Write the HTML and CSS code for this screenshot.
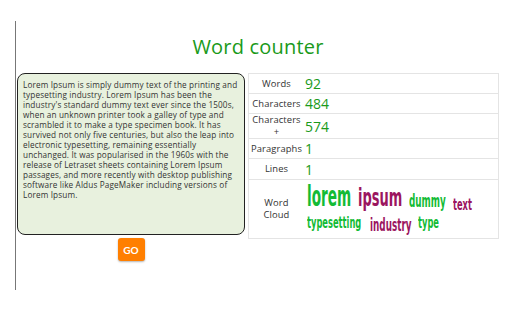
FILE: index.html
```html
<!DOCTYPE html>
<html>
<head>
<meta charset="utf-8">
<link rel="stylesheet" href="styles.css">
</head>
<body>
<div class="frame">
  <div class="content">
    <h1 class="title">Word counter</h1>
    <div class="main">
      <div class="left">
        <textarea class="input">Lorem Ipsum is simply dummy text of the printing and typesetting industry. Lorem Ipsum has been the industry's standard dummy text ever since the 1500s, when an unknown printer took a galley of type and scrambled it to make a type specimen book. It has survived not only five centuries, but also the leap into electronic typesetting, remaining essentially unchanged. It was popularised in the 1960s with the release of Letraset sheets containing Lorem Ipsum passages, and more recently with desktop publishing software like Aldus PageMaker including versions of Lorem Ipsum.</textarea>
        <button class="go">GO</button>
      </div>
      <table class="stats">
        <tr class="r1"><th>Words</th><td class="val">92</td></tr>
        <tr class="r2"><th>Characters</th><td class="val">484</td></tr>
        <tr class="r3"><th>Characters<br>+</th><td class="val">574</td></tr>
        <tr class="r4"><th>Paragraphs</th><td class="val">1</td></tr>
        <tr class="r5"><th>Lines</th><td class="val">1</td></tr>
        <tr class="r6"><th>Word<br>Cloud</th><td class="cloud">
          <div class="cloud-line l1">
            <span class="w g w-lorem"><span class="t">lorem</span></span>
            <span class="w m w-ipsum"><span class="t">ipsum</span></span>
            <span class="w g w-dummy"><span class="t">dummy</span></span>
            <span class="w m w-text"><span class="t">text</span></span>
          </div>
          <div class="cloud-line l2">
            <span class="w g w-type1"><span class="t">typesetting</span></span>
            <span class="w m w-ind"><span class="t">industry</span></span>
            <span class="w g w-type2"><span class="t">type</span></span>
          </div>
        </td></tr>
      </table>
    </div>
  </div>
</div>
</body>
</html>
```
FILE: styles.css
```css
html, body {
  margin: 0;
  padding: 0;
  background: #fff;
}
body {
  font-family: "Open Sans", "DejaVu Sans", sans-serif;
  color: #333;
}
.frame {
  margin: 21px 0 0 15px;
  height: 269px;
  border-left: 1px solid #777;
}
.content {
  margin-left: 1px;
  width: 482px;
}
.title {
  margin: 0;
  padding-top: 14px;
  height: 38px;
  font-weight: 400;
  font-size: 20px;
  line-height: 24px;
  color: #1a9a1a;
  text-align: center;
  letter-spacing: 0.2px;
}
.main {
  display: flex;
  gap: 3px;
  align-items: flex-start;
}
.left {
  width: 228px;
  flex: none;
  display: flex;
  flex-direction: column;
  align-items: center;
}
.input {
  box-sizing: border-box;
  width: 228px;
  height: 162px;
  margin: 0;
  padding: 6px 4px 4px 5px;
  border: 1.5px solid #222;
  border-radius: 8px;
  background: #e8f1de;
  font-family: "Open Sans", "DejaVu Sans", sans-serif;
  font-size: 8.2px;
  letter-spacing: 0.14px;
  line-height: 10px;
  color: #333;
  resize: none;
  overflow: hidden;
}
.go {
  margin-top: 3px;
  width: 27px;
  height: 23px;
  padding: 0;
  border: none;
  border-radius: 3px;
  background: #ff7f00;
  color: #fff;
  font-family: "Lato", sans-serif;
  font-weight: 700;
  font-size: 10px;
  box-shadow: 0 1px 2px rgba(0,0,0,0.3);
}
.stats {
  width: 251px;
  flex: none;
  table-layout: fixed;
  border-collapse: collapse;
  border: 1px solid #e4e4e4;
}
.stats th, .stats td {
  border-top: 1px solid #e4e4e4;
  padding: 0;
}
.stats th {
  width: 55px;
  font-weight: 400;
  font-size: 9.4px;
  letter-spacing: 0.1px;
  line-height: 12px;
  color: #333;
  text-align: center;
  white-space: nowrap;
}
.val {
  padding-left: 1px !important;
  font-size: 14px;
  color: #1a9a1a;
  text-align: left;
}
.r1 { height: 20px; }
.r2 { height: 20px; }
.r3 { height: 25px; }
.r4 { height: 20px; }
.r5 { height: 21px; }
.r6 { height: 59px; }
.cloud {
  padding: 0 0 2px 3px !important;
  vertical-align: middle;
  overflow: hidden;
}
.cloud-line {
  display: flex;
  align-items: baseline;
  white-space: nowrap;
}
.l1 { height: 30px; }
.l2 { height: 24px; }
.w {
  display: inline-block;
  flex: none;
  font-family: "DejaVu Sans", sans-serif;
  font-weight: 700;
  position: relative;
}
.t {
  display: inline-block;
  transform-origin: left center;
  transform: scaleX(0.52);
}
.g { color: #13bb35; }
.m { color: #9b155f; }
.w-lorem { width: 51px; font-size: 29px; line-height: 30px; }
.w-lorem .t { transform: scaleX(0.47); }
.w-ipsum { width: 51px; font-size: 25px; line-height: 30px; }
.w-dummy { width: 44px; font-size: 17px; line-height: 30px; top: 1px; }
.w-text { width: 22px; font-size: 16px; line-height: 30px; top: 4px; }
.w-type1 { width: 63px; font-size: 16px; line-height: 22px; }
.w-ind { width: 48px; font-size: 17px; line-height: 22px; top: 3px; }
.w-type2 { width: 24px; font-size: 16px; line-height: 22px; }
```
